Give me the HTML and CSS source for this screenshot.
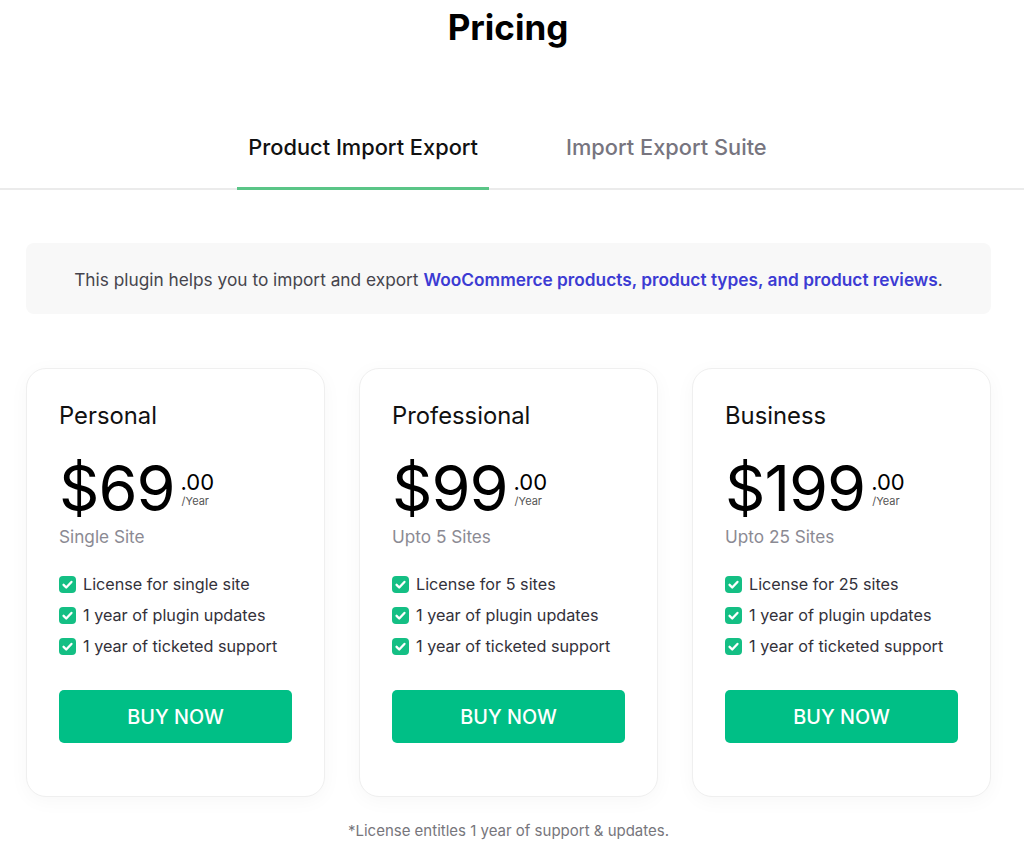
FILE: index.html
```html
<!DOCTYPE html>
<html>
<head>
<meta charset="utf-8">
<link rel="stylesheet" href="styles.css">
</head>
<body>
<h1 class="title">Pricing</h1>
<nav class="tabs">
  <div class="tab active">Product Import Export</div>
  <div class="tab">Import Export Suite</div>
</nav>
<div class="content">
  <div class="info">This plugin helps you to import and export <b>WooCommerce products, product types, and product reviews</b>.</div>
  <div class="cards">
    <div class="card">
      <div class="plan">Personal</div>
      <div class="price"><span class="amount">$69</span><span class="meta"><span class="cents">.00</span><span class="per">/Year</span></span></div>
      <div class="sites">Single Site</div>
      <ul class="features">
        <li><span class="check"><svg viewBox="0 0 16 16"><path d="M4.3 8.3l2.5 2.5 4.9-5.2" /></svg></span>License for single site</li>
        <li><span class="check"><svg viewBox="0 0 16 16"><path d="M4.3 8.3l2.5 2.5 4.9-5.2" /></svg></span>1 year of plugin updates</li>
        <li><span class="check"><svg viewBox="0 0 16 16"><path d="M4.3 8.3l2.5 2.5 4.9-5.2" /></svg></span>1 year of ticketed support</li>
      </ul>
      <a class="buy">BUY NOW</a>
    </div>
    <div class="card">
      <div class="plan">Professional</div>
      <div class="price"><span class="amount">$99</span><span class="meta"><span class="cents">.00</span><span class="per">/Year</span></span></div>
      <div class="sites">Upto 5 Sites</div>
      <ul class="features">
        <li><span class="check"><svg viewBox="0 0 16 16"><path d="M4.3 8.3l2.5 2.5 4.9-5.2" /></svg></span>License for 5 sites</li>
        <li><span class="check"><svg viewBox="0 0 16 16"><path d="M4.3 8.3l2.5 2.5 4.9-5.2" /></svg></span>1 year of plugin updates</li>
        <li><span class="check"><svg viewBox="0 0 16 16"><path d="M4.3 8.3l2.5 2.5 4.9-5.2" /></svg></span>1 year of ticketed support</li>
      </ul>
      <a class="buy">BUY NOW</a>
    </div>
    <div class="card">
      <div class="plan">Business</div>
      <div class="price"><span class="amount">$199</span><span class="meta"><span class="cents">.00</span><span class="per">/Year</span></span></div>
      <div class="sites">Upto 25 Sites</div>
      <ul class="features">
        <li><span class="check"><svg viewBox="0 0 16 16"><path d="M4.3 8.3l2.5 2.5 4.9-5.2" /></svg></span>License for 25 sites</li>
        <li><span class="check"><svg viewBox="0 0 16 16"><path d="M4.3 8.3l2.5 2.5 4.9-5.2" /></svg></span>1 year of plugin updates</li>
        <li><span class="check"><svg viewBox="0 0 16 16"><path d="M4.3 8.3l2.5 2.5 4.9-5.2" /></svg></span>1 year of ticketed support</li>
      </ul>
      <a class="buy">BUY NOW</a>
    </div>
  </div>
  <p class="note">*License entitles 1 year of support &amp; updates.</p>
</div>
</body>
</html>
```
FILE: styles.css
```css
* { box-sizing: border-box; }
html, body { margin: 0; padding: 0; background: #fff; }
body {
  font-family: Inter, "Noto Sans", sans-serif;
  color: #111;
  width: 1024px;
  overflow: hidden;
}
.title {
  margin: 0;
  padding-top: 7px;
  padding-right: 8px;
  text-align: center;
  font-size: 35px;
  font-weight: 700;
  line-height: 40px;
  color: #000;
}
.tabs {
  margin-top: 76px;
  display: flex;
  justify-content: center;
  border-bottom: 2px solid #ebebeb;
  padding-right: 9px;
}
.tab {
  font-size: 21.8px;
  font-weight: 500;
  line-height: 24px;
  padding: 12px 11px 28px;
  color: #77757f;
  margin-bottom: -2px;
  border-bottom: 3px solid transparent;
}
.tab.active {
  color: #111;
  border-bottom-color: #5ac587;
  margin-right: 66px;
}
.content {
  padding: 53px 33px 0 26px;
}
.info {
  background: #f8f8f8;
  border-radius: 8px;
  height: 71px;
  display: flex;
  align-items: center;
  justify-content: center;
  font-size: 17.3px;
  color: #45444c;
  padding-top: 1px;
}
.info b {
  color: #3c3bd3;
  font-weight: 600;
  margin-left: 5px;
}
.cards {
  margin-top: 54px;
  display: grid;
  grid-template-columns: repeat(3, 299px);
  gap: 34px;
}
.card {
  border: 1px solid #efefef;
  border-radius: 20px;
  box-shadow: 0 4px 20px rgba(0,0,0,0.035);
  padding: 32px 32px 53px;
  background: #fff;
}
.plan {
  font-size: 23.8px;
  line-height: 30px;
  color: #111;
}
.price {
  display: flex;
  align-items: flex-start;
  margin-top: 20px;
  height: 70px;
}
.amount {
  font-size: 63px;
  line-height: 74px;
  color: #000;
  letter-spacing: -1px;
}
.meta {
  display: flex;
  flex-direction: column;
  margin-left: 6px;
  margin-top: 19px;
}
.cents {
  font-size: 22px;
  line-height: 24px;
  color: #000;
}
.per {
  font-size: 11px;
  line-height: 14px;
  color: #555;
  margin-left: 1px;
}
.sites {
  margin-top: 6px;
  font-size: 17.2px;
  line-height: 20px;
  color: #8b8a93;
}
.features {
  list-style: none;
  margin: 27px 0 0;
  padding: 0;
}
.features li {
  display: flex;
  align-items: center;
  font-size: 16.2px;
  line-height: 20px;
  color: #33313a;
  margin-bottom: 11px;
}
.check {
  width: 17px;
  height: 17px;
  border-radius: 4px;
  background: #14bf84;
  margin-right: 7px;
  display: flex;
  flex: none;
}
.check svg {
  width: 17px;
  height: 17px;
  fill: none;
  stroke: #fff;
  stroke-width: 2.2;
  stroke-linecap: round;
  stroke-linejoin: round;
}
.buy {
  display: flex;
  align-items: center;
  justify-content: center;
  margin-top: 34px;
  height: 53px;
  border-radius: 5px;
  background: #00bf86;
  color: #fff;
  font-size: 19.8px;
  font-weight: 500;
  width: 233px;
}
.note {
  text-align: center;
  margin: 24px 0 0;
  font-size: 15px;
  color: #77767c;
}
```
